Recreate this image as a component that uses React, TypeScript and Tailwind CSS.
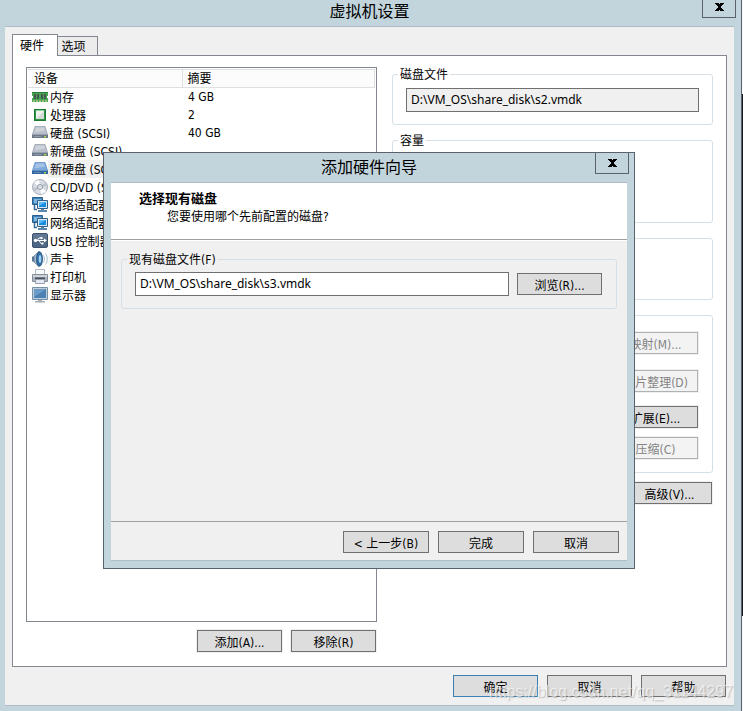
import React from 'react';
import clsx from 'clsx';

type IconName = 'memory' | 'cpu' | 'disk' | 'diskSelected' | 'cd' | 'network' | 'usb' | 'sound' | 'printer' | 'display';

interface Device {
  id: number;
  icon: IconName;
  name: string;
  summary?: string;
  selected?: boolean;
}

const devices: Device[] = [
  { id: 1, icon: 'memory', name: '内存', summary: '4 GB' },
  { id: 2, icon: 'cpu', name: '处理器', summary: '2' },
  { id: 3, icon: 'disk', name: '硬盘 (SCSI)', summary: '40 GB' },
  { id: 4, icon: 'disk', name: '新硬盘 (SCSI)' },
  { id: 5, icon: 'diskSelected', name: '新硬盘 (SCSI)', selected: true },
  { id: 6, icon: 'cd', name: 'CD/DVD (SATA)' },
  { id: 7, icon: 'network', name: '网络适配器' },
  { id: 8, icon: 'network', name: '网络适配器 2' },
  { id: 9, icon: 'usb', name: 'USB 控制器' },
  { id: 10, icon: 'sound', name: '声卡' },
  { id: 11, icon: 'printer', name: '打印机' },
  { id: 12, icon: 'display', name: '显示器' },
];

function Disk({ top, front, edge }: { top: string; front: string; edge: string }) {
  return (
    <>
      <path d="M3 1.500h10l2.500 8H.5z" fill={top} stroke={edge} strokeWidth="0.800" />
      <path d="M4 2.500h8l1 3-10.500 2z" fill="#fff" opacity="0.300" />
      <path d="M0 9.500h16V13H0z" fill={front} />
      <path d="M0 9h16v1H0z" fill={edge} />
      <path d="M2 11.500h7" stroke="#fff" strokeOpacity="0.250" />
      <path d="M12 11h2v1.500h-2z" fill="#a6d64a" />
    </>
  );
}

function DeviceIcon({ name }: { name: IconName }) {
  return (
    <svg className="w-4 h-4 flex-shrink-0" viewBox="0 0 16 16" fill="none" aria-hidden="true">
      {name === 'memory' && (
        <>
          <path d="M0 3h16v10H0z" fill="#46a653" />
          <path d="M0 3h16v1H0z" fill="#2a7a36" />
          <path d="M2 5h2v5H2zM5 5h2v5H5zM9 5h2v5H9zM12 5h2v5h-2z" fill="#4a5751" />
          <path d="M1 12h14" stroke="#e8d9a0" strokeDasharray="2 1" />
          <path d="M0 7h1v2H0zM15 7h1v2h-1z" fill="#fff" />
        </>
      )}
      {name === 'cpu' && (
        <>
          <path d="M2 2h12v12H2z" fill="#2f9443" />
          <path d="M2.500 2.500h11v11h-11z" stroke="#1f7a31" />
          <path d="M4 4h8v8H4z" fill="#f0f1f1" />
          <path d="M4 12l8-8v8z" fill="#d6d9d8" />
          <path d="M4 3.500h8" stroke="#8fd19b" />
        </>
      )}
      {name === 'disk' && <Disk top="#b9c0cb" front="#6b7888" edge="#98a2b0" />}
      {name === 'diskSelected' && <Disk top="#7eaadb" front="#34659e" edge="#6291c6" />}
      {name === 'cd' && (
        <>
          <circle cx="8" cy="8" r="7.500" fill="#d8dde4" stroke="#a7afba" />
          <path d="M8 8L2 4a7 7 0 0 1 5-3zM8 8l6 4a7 7 0 0 1-5 3z" fill="#fff" />
          <path d="M8 8l6-5a7 7 0 0 1 1 4zM8 8l-6 5a7 7 0 0 1-1-4z" fill="#bcc4ce" />
          <circle cx="8" cy="8" r="2.500" fill="#f5f6f8" stroke="#8d97a4" />
          <circle cx="8" cy="8" r="1" fill="#fff" stroke="#a3abb6" strokeWidth="0.500" />
        </>
      )}
      {name === 'network' && (
        <>
          <path d="M.5.5h10v7H.5z" fill="#4384b8" stroke="#285f8e" />
          <path d="M2 2h7v4H2z" fill="#7db7df" />
          <path d="M2.500 8v4.500H5" stroke="#3b6d98" strokeWidth="1.500" />
          <path d="M5.500 3.500h10v8h-10z" fill="#d9e7f2" stroke="#315f89" />
          <path d="M7 5h7v5H7z" fill="#168be0" />
          <path d="M7 5h7l-7 4z" fill="#5db9f5" />
          <path d="M9 12h3v1H9zM6 13h9v2H6z" fill="#5b87ab" />
        </>
      )}
      {name === 'usb' && (
        <>
          <rect x="0.500" y="0.500" width="15" height="14" rx="1.500" fill="#4d6683" stroke="#3a526e" />
          <path d="M1 1h14v6H1z" fill="#7288a1" opacity="0.500" />
          <path d="M3 7.500h10M5 7.500L7 5h2M7 7.500l2 3h1" stroke="#fff" />
          <path d="M12 5.500l3 2-3 2zM8.500 4h2v2h-2zM9.500 9.500h2v2h-2z" fill="#fff" />
          <circle cx="3.500" cy="7.500" r="1.700" fill="#fff" />
        </>
      )}
      {name === 'sound' && (
        <>
          <path d="M0 5.500h3v5H0z" fill="#5b7795" />
          <path d="M2 5l5-4.500v15L2 11z" fill="#a5bbd0" stroke="#486682" strokeWidth="0.700" />
          <ellipse cx="7.500" cy="8" rx="3" ry="7.300" fill="#2f6fa9" stroke="#274d72" strokeWidth="0.800" />
          <ellipse cx="8" cy="8" rx="1.300" ry="4" fill="#9fd1f3" />
          <path d="M11.500 4.500c1.300 2 1.300 5 0 7M13.500 2.500c2.300 3 2.300 8 0 11" stroke="#a4bace" />
        </>
      )}
      {name === 'printer' && (
        <>
          <path d="M3.500.5h9v6h-9z" fill="#fafbfc" stroke="#b4bac3" />
          <path d="M.5 5.500h15v7H.5z" fill="#adb3bd" stroke="#868e99" />
          <path d="M1 6h14v2H1z" fill="#cdd2d9" />
          <path d="M3 8.500h10v2H3z" fill="#414a57" />
          <path d="M3.500 10.500h9v4h-9z" fill="#e4e9f3" stroke="#99a2b2" />
        </>
      )}
      {name === 'display' && (
        <>
          <path d="M.5.5h15v12H.5z" fill="#c4ced8" stroke="#7690a8" />
          <path d="M2 2h12v9H2z" fill="#4c81b3" />
          <path d="M2 2h12L2 10z" fill="#6b9cc9" />
          <path d="M6 13h4v1H6zM3 14h10v1.500H3z" fill="#a3adb7" />
        </>
      )}
    </svg>
  );
}

interface DialogButtonProps {
  children: React.ReactNode;
  disabled?: boolean;
  isDefault?: boolean;
  wide?: boolean;
}

function DialogButton({ children, disabled, isDefault, wide }: DialogButtonProps) {
  return (
    <button
      type="button"
      disabled={disabled}
      className={clsx(
        'h-[22px] pt-[3px] border leading-4 whitespace-nowrap outline outline-[#f0f0f0]',
        wide ? 'w-[86px]' : 'w-[85px]',
        disabled && 'bg-[#f3f3f3] border-[#adb2b5] text-[#838383]',
        !disabled && 'bg-[#dddddd] text-black',
        !disabled && (isDefault ? 'border-[#3c7fb1]' : 'border-[#707070]')
      )}
    >
      {children}
    </button>
  );
}

function CloseButton({ className }: { className: string }) {
  return (
    <button
      type="button"
      aria-label="关闭"
      className={clsx('justify-self-end flex justify-center w-[34px] border border-t-0 border-[#5a626e]', className)}
    >
      <svg className="w-[9px] h-2" viewBox="0 0 9 8" aria-hidden="true">
        <path
          d="M0 0h4v1h1V0h4v1H8v1H7v1H6v2h1v1h1v1h1v1H5V7H4v1H0V7h1V6h1V5h1V3H2V2H1V1H0z"
          fill="#000"
        />
      </svg>
    </button>
  );
}

interface GroupProps {
  title: string;
  className?: string;
  children?: React.ReactNode;
}

function Group({ title, className, children }: GroupProps) {
  return (
    <fieldset className={clsx('min-w-0 border border-[#d5dfe5] rounded-[3px] px-[13px]', className)}>
      <legend className="-ml-2 px-0.5 h-[18px] leading-[18px] pt-px">{title}</legend>
      {children}
    </fieldset>
  );
}

function DeviceTable() {
  return (
    <div className="flex-1 mt-0.5 p-px border border-[#828790] bg-white overflow-hidden">
      <table className="w-full table-fixed border-collapse text-left">
        <thead>
          <tr className="h-[18px] bg-[#fcfcfc]">
            <th className="w-[154px] p-0 pt-px pl-1.5 font-normal leading-4 border-r border-b border-t border-[#dedfe1]">设备</th>
            <th className="p-0 pt-px pl-[5px] font-normal leading-4 border border-[#dedfe1]">摘要</th>
          </tr>
        </thead>
        <tbody>
          {devices.map((device) => (
            <tr key={device.id} className="h-[18px]">
              <td className="p-0 pl-1">
                <div className="flex items-center h-[18px]">
                  <DeviceIcon name={device.icon} />
                  <span className={clsx('h-[18px] leading-5 pl-0.5 whitespace-nowrap', device.selected && 'flex-1 bg-[#f0f0f0]')}>
                    {device.name}
                  </span>
                </div>
              </td>
              <td className="p-0 pl-1.5 leading-[18px]">{device.summary}</td>
            </tr>
          ))}
        </tbody>
      </table>
    </div>
  );
}

function DiskPanel() {
  return (
    <div className="flex flex-col gap-1.5 min-w-0">
      <Group title="磁盘文件" className="pb-3">
        <input
          type="text"
          readOnly
          aria-label="磁盘文件"
          defaultValue="D:\VM_OS\share_disk\s2.vmdk"
          className="block w-full h-6 mt-[5px] px-1 pb-0.5 border border-[#707070] bg-[#f0f0f0] font-['Noto_Sans',sans-serif]"
        />
      </Group>
      <Group title="容量" className="h-[92px]" />
      <Group title="磁盘信息" className="h-[71px]" />
      <Group title="磁盘实用工具" className="pb-[13px]">
        <div className="flex flex-col items-end pt-2 pr-px">
          <DialogButton disabled>映射(M)...</DialogButton>
          <div className="mt-4 flex">
            <DialogButton disabled>碎片整理(D)</DialogButton>
          </div>
          <div className="mt-3.5 flex">
            <DialogButton>扩展(E)...</DialogButton>
          </div>
          <div className="mt-[9px] flex">
            <DialogButton disabled>压缩(C)</DialogButton>
          </div>
        </div>
      </Group>
      <div className="flex justify-end pt-[3px] pr-px">
        <DialogButton>高级(V)...</DialogButton>
      </div>
    </div>
  );
}

function AddHardwareWizard() {
  return (
    <section
      role="dialog"
      aria-labelledby="wizard-title"
      className="absolute top-[152px] left-[103px] right-[108px] h-[417px] flex flex-col px-[7px] pb-[7px] border border-[#5a626e] bg-[#c3d5dc]"
    >
      <header className="grid grid-cols-[1fr_auto_1fr] -mx-[2px] h-[29px]">
        <h2 id="wizard-title" className="col-start-2 text-base leading-[29px]">添加硬件向导</h2>
        <CloseButton className="h-[21px] pt-1.5" />
      </header>
      <div className="flex-1 flex flex-col border-y border-[#b0bcc6] bg-[#f0f0f0]">
        <div className="h-[57px] pt-[7px] pl-7 bg-white border-b border-[#a0a0a0]">
          <h3 className="font-bold text-[13px] leading-[18px]">选择现有磁盘</h3>
          <p className="pl-7 leading-[18px]">您要使用哪个先前配置的磁盘?</p>
        </div>
        <div className="flex-1 px-2.5 pt-[9px] border-t border-white">
          <Group title="现有磁盘文件(F)" className="pb-3">
            <div className="flex items-center gap-2 pr-px mt-1">
              <input
                type="text"
                aria-label="现有磁盘文件(F)"
                defaultValue="D:\VM_OS\share_disk\s3.vmdk"
                className="flex-1 min-w-0 h-6 px-1 pb-0.5 border border-[#707070] bg-white font-['Noto_Sans',sans-serif]"
              />
              <DialogButton>浏览(R)...</DialogButton>
            </div>
          </Group>
        </div>
        <footer className="flex justify-end gap-[9px] pt-[9px] pr-2 pb-[7px] border-t border-[#a0a0a0]">
          <DialogButton wide>&lt; 上一步(B)</DialogButton>
          <DialogButton wide>完成</DialogButton>
          <DialogButton wide>取消</DialogButton>
        </footer>
      </div>
    </section>
  );
}

export default function App() {
  return (
    <div className="relative flex min-h-screen text-xs text-black font-['DejaVu_Sans_Condensed','Noto_Sans_CJK_SC',sans-serif]">
      <main className="flex-1 min-w-0 flex flex-col pl-[5px] pr-[7px] pb-[5px] bg-[#c3d5dc] border-r border-[#5a626e]">
        <header className="grid grid-cols-[1fr_auto_1fr] -mx-[2px] h-[26px]">
          <h1 className="col-start-2 text-base leading-6">虚拟机设置</h1>
          <CloseButton className="h-[18px] pt-[3px]" />
        </header>

        <div className="flex-1 flex flex-col px-[7px] pt-[7px] pb-2 bg-[#f0f0f0] border-y border-[#b0bcc6]">
          {/* Tabs */}
          <div role="tablist" className="flex items-end">
            <button
              type="button"
              role="tab"
              aria-selected="true"
              className="relative z-10 -mb-px w-[46px] h-[22px] pr-1.5 border border-b-0 border-[#828790] bg-white leading-5"
            >
              硬件
            </button>
            <button
              type="button"
              role="tab"
              aria-selected="false"
              className="w-10 h-[19px] pr-2 border border-l-0 border-b-0 border-[#828790] bg-[#ececec] leading-5"
            >
              选项
            </button>
          </div>

          {/* Tab page */}
          <div className="flex-1 grid grid-cols-[351fr_321fr] gap-[15px] px-[13px] pt-[9px] pb-3.5 border border-[#828790] bg-white">
            <div className="flex flex-col min-w-0">
              <DeviceTable />
              <div className="flex justify-end gap-[9px] pt-2 pr-px">
                <DialogButton>添加(A)...</DialogButton>
                <DialogButton>移除(R)</DialogButton>
              </div>
            </div>
            <DiskPanel />
          </div>

          <div className="flex justify-end gap-[9px] pt-2 pr-px">
            <DialogButton isDefault>确定</DialogButton>
            <DialogButton>取消</DialogButton>
            <DialogButton>帮助</DialogButton>
          </div>
        </div>
      </main>

      {/* Desktop behind the window */}
      <div className="flex flex-col w-px bg-[#f4f6f8]">
        <div className="h-[94px]" />
        <div className="flex-1 bg-[#16181c]" />
        <div className="h-[95px]" />
      </div>

      <AddHardwareWizard />

      <div className="absolute right-2.5 bottom-[7px] text-base leading-6 text-white/60 [text-shadow:1px_1px_1px_rgba(120,120,120,0.4)] font-['Liberation_Sans',sans-serif] pointer-events-none">
        https://blog.csdn.net/qq_31144297
      </div>
    </div>
  );
}
